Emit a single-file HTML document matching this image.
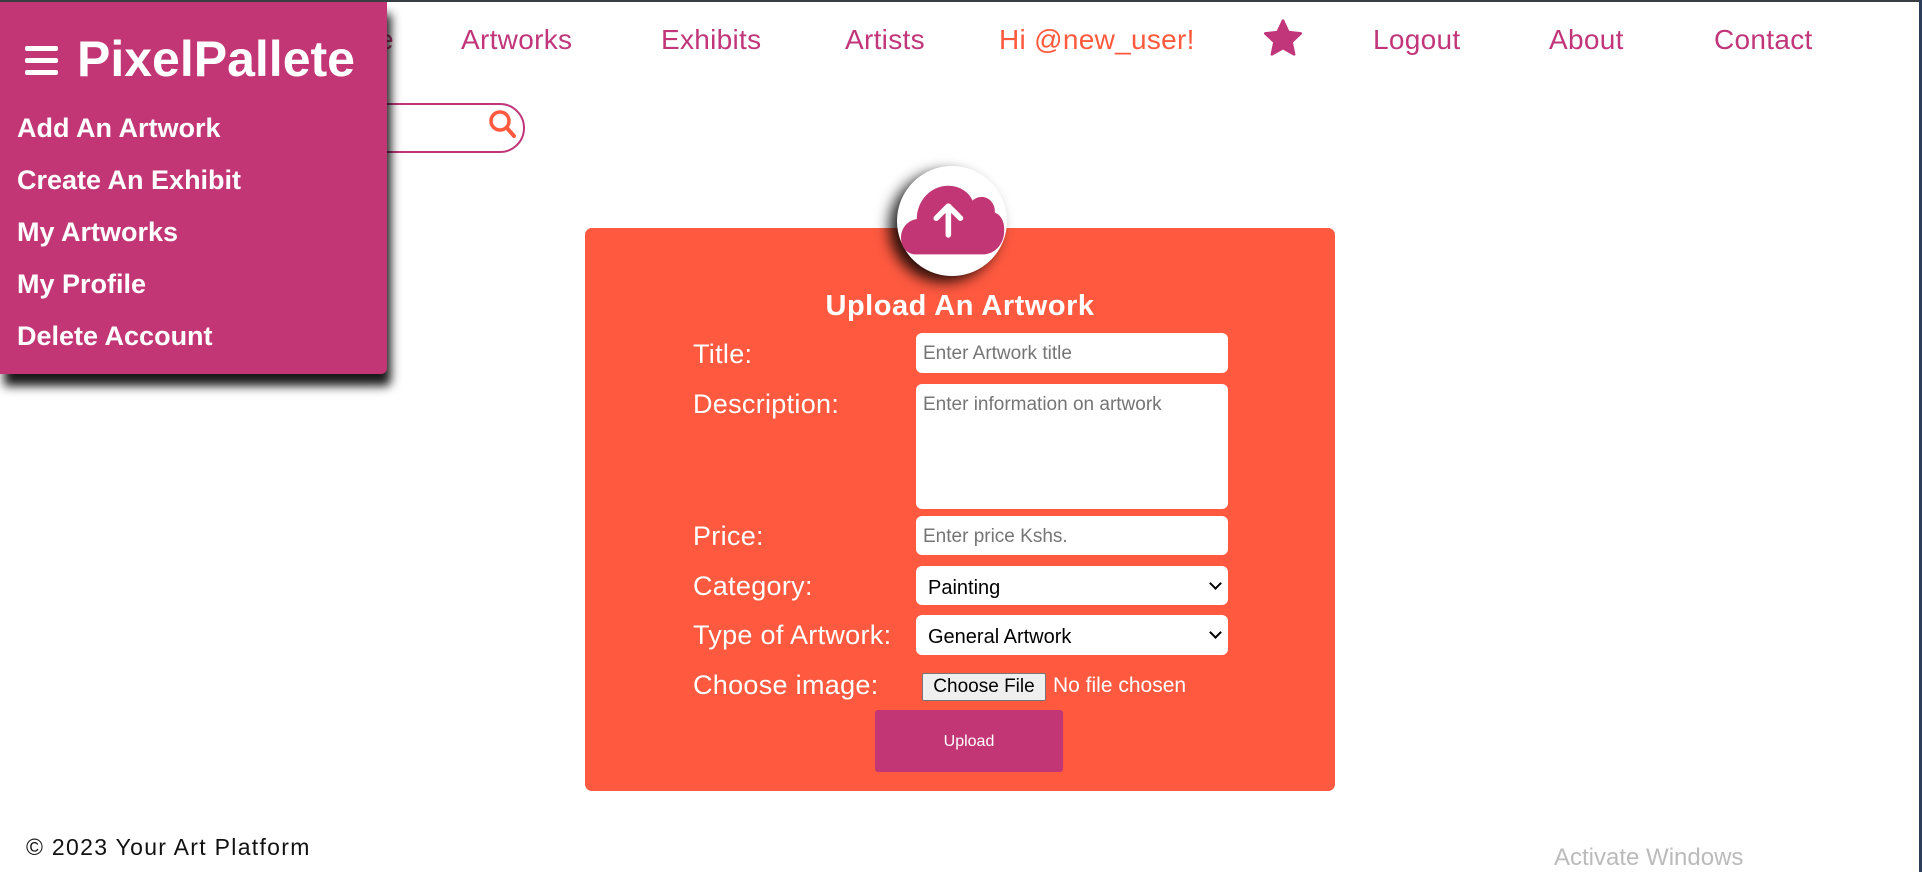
<!DOCTYPE html>
<html><head><meta charset="utf-8"><style>
*{margin:0;padding:0;box-sizing:border-box}
body{width:1922px;height:872px;background:#fff;position:relative;overflow:hidden;font-family:"Liberation Sans",sans-serif}
.topbar{position:absolute;left:0;top:0;width:1922px;height:2px;background:#3a3d42}
.rightbar{position:absolute;right:0;top:0;width:3px;height:872px;background:#2d3e5a}
.nav{position:absolute;top:24px;font-size:28px;color:#c1367a;white-space:nowrap;letter-spacing:0.3px}
.side{position:absolute;left:0;top:2px;width:387px;height:372px;background:#c33675;border-radius:0 0 6px 0;box-shadow:4px 12px 10px rgba(0,0,0,.9)}
.side .logo{position:absolute;left:77px;top:28px;font-size:50px;font-weight:bold;color:#fff;letter-spacing:0px}
.ham{position:absolute;left:25px;width:33px;height:5px;background:#fff;border-radius:2px}
.side .it{position:absolute;left:17px;font-size:27px;font-weight:bold;color:#fff;letter-spacing:0px}
.search{position:absolute;left:300px;top:103px;width:225px;height:50px;border:2px solid #c1367a;border-radius:25px}
.card{position:absolute;left:585px;top:228px;width:750px;height:563px;background:#ff5a40;border-radius:7px}
.circ{position:absolute;left:897px;top:166px;width:110px;height:110px;border-radius:50%;background:#fff;box-shadow:-8px 6px 14px rgba(0,0,0,.85)}
.h{position:absolute;left:585px;width:750px;top:290px;text-align:center;font-size:29px;font-weight:bold;color:#fff;letter-spacing:0.5px}
.lab{position:absolute;left:693px;font-size:27px;color:#fff;letter-spacing:0.3px}
.inp{position:absolute;left:916px;width:312px;background:#fff;border-radius:6px;font-size:19px;color:#757575;padding:10px 7px 0}
.sel{color:#000;padding:11px 12px 0;font-size:20px}
.chev{position:absolute;right:8px;top:13px;width:9px;height:9px;border-right:2px solid #000;border-bottom:2px solid #000;transform:rotate(45deg)}
</style></head><body>
<div class="topbar"></div><div class="rightbar"></div>
<div class="nav" style="left:318px">Home</div>
<div class="nav" style="left:461px">Artworks</div>
<div class="nav" style="left:661px">Exhibits</div>
<div class="nav" style="left:845px">Artists</div>
<div class="nav" style="left:999px;color:#ff5a3d">Hi @new_user!</div>
<svg style="position:absolute;left:1262px;top:18px" width="42" height="40" viewBox="0 0 24 23"><path d="M12 1.5l3.1 6.6 7.1.8-5.3 4.9 1.5 7.1L12 17.3l-6.4 3.6 1.5-7.1-5.3-4.9 7.1-.8z" fill="#c1367a" stroke="#c1367a" stroke-width="1.5" stroke-linejoin="round"/></svg>
<div class="nav" style="left:1373px">Logout</div>
<div class="nav" style="left:1549px">About</div>
<div class="nav" style="left:1714px">Contact</div>
<div class="search"></div>
<svg style="position:absolute;left:488px;top:108px" width="30" height="32" viewBox="0 0 30 32"><circle cx="12" cy="13" r="9" fill="none" stroke="#ff5a3d" stroke-width="3.5"/><path d="M19 20l7 8" stroke="#ff5a3d" stroke-width="4" stroke-linecap="round"/></svg>
<div class="side">
<div class="ham" style="top:44px"></div><div class="ham" style="top:56px"></div><div class="ham" style="top:68px"></div>
<div class="logo">PixelPallete</div>
<div class="it" style="top:111px">Add An Artwork</div>
<div class="it" style="top:163px">Create An Exhibit</div>
<div class="it" style="top:215px">My Artworks</div>
<div class="it" style="top:267px">My Profile</div>
<div class="it" style="top:319px">Delete Account</div>
</div>
<div class="card"></div>
<div class="circ"></div>
<svg style="position:absolute;left:901px;top:185px" width="104" height="72" viewBox="0 0 112 76"><path d="M16 74C5 74 0 64 0 56 0 45 8 37 17 36 17 16 32 0 51 0c11 0 22 6 26 16 2-2 6-4 10-4 8 0 15 8 14 17 8 3 11 12 10 22-1 13-11 23-23 23z" fill="#c33675"/><path d="M51 53V22M38 35l13-13 13 13" stroke="#fff" stroke-width="6" stroke-linecap="round" stroke-linejoin="round" fill="none"/></svg>
<div class="h">Upload An Artwork</div>
<div class="lab" style="top:339px">Title:</div>
<div class="lab" style="top:389px">Description:</div>
<div class="lab" style="top:521px">Price:</div>
<div class="lab" style="top:571px">Category:</div>
<div class="lab" style="top:620px">Type of Artwork:</div>
<div class="lab" style="top:670px">Choose image:</div>
<div class="inp" style="top:333px;height:40px">Enter Artwork title</div>
<div class="inp" style="top:384px;height:125px">Enter information on artwork</div>
<div class="inp" style="top:516px;height:39px">Enter price Kshs.</div>
<div class="inp sel" style="top:566px;height:39px">Painting<span class="chev"></span></div>
<div class="inp sel" style="top:615px;height:40px">General Artwork<span class="chev"></span></div>
<div style="position:absolute;left:922px;top:673px;width:124px;height:28px;background:#efefef;border:1px solid #767676;border-radius:2px;font-size:19px;text-align:center;line-height:26px;color:#000">Choose File</div>
<div style="position:absolute;left:1053px;top:674px;font-size:21px;color:#fff">No file chosen</div>
<div style="position:absolute;left:875px;top:710px;width:188px;height:62px;background:#c33675;border-radius:3px;color:#fff;font-size:16px;text-align:center;line-height:64px">Upload</div>
<div style="position:absolute;left:26px;top:834px;font-size:23px;color:#111;letter-spacing:1.3px">© 2023 Your Art Platform</div>
<div style="position:absolute;left:1554px;top:844px;font-size:24px;color:#bbb">Activate Windows</div>
</body></html>
